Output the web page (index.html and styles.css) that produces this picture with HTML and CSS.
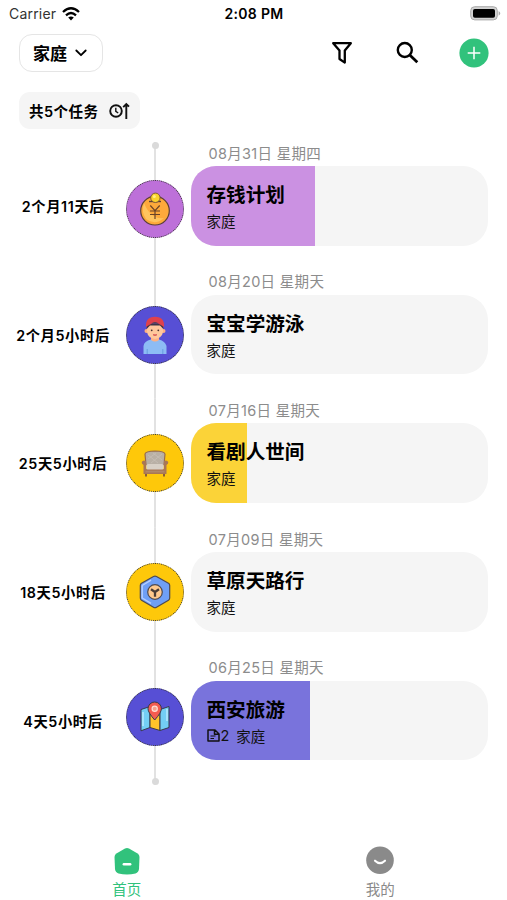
FILE: index.html
```
<!DOCTYPE html>
<html lang="zh-CN">
<head>
<meta charset="UTF-8">
<meta name="viewport" content="width=device-width, initial-scale=1.0">
<title>首页</title>
<link rel="stylesheet" href="styles.css">
</head>
<body>
    <div class="status-bar">
        <div class="carrier">
            <span>Carrier</span>
            <svg width="18" height="14" viewBox="0 0 18 14" fill="none" stroke="#000" stroke-width="2.3">
                <path d="M1 5 Q9 -2.4 17 5"/>
                <path d="M4 8.3 Q9 3.8 14 8.3"/>
                <path d="M6.2 10.6 Q9 8.2 11.8 10.6 L9 13.5 Z" fill="#000" stroke="none"/>
            </svg>
        </div>
        <div class="clock">2:08 PM</div>
        <svg class="battery" width="31" height="15" viewBox="0 0 31 15">
            <rect x="0.7" y="0.7" width="26.6" height="13.2" rx="4" fill="#d2d2d2" stroke="#aaa"/>
            <rect x="3" y="3" width="22" height="8.8" rx="1.8" fill="#000"/>
            <path d="M28.6 5 Q32 7.3 28.6 9.7 Z" fill="#aaa"/>
        </svg>
    </div>

    <div class="toolbar">
        <button class="group-button">
            <span>家庭</span>
            <svg width="12" height="8" viewBox="0 0 12 8" fill="none" stroke="#000" stroke-width="1.8" stroke-linecap="round" stroke-linejoin="round">
                <path d="M1.3 1.5 L6 6.2 L10.7 1.5"/>
            </svg>
        </button>
        <div class="actions">
            <svg width="22" height="24" viewBox="0 0 22 24" fill="none" stroke="#000" stroke-width="2.3" stroke-linejoin="round">
                <path d="M2.2 2.2 H19.8 L13.8 9.5 V21.6 L8.5 18 V9.5 Z"/>
            </svg>
            <svg width="24" height="24" viewBox="0 0 24 24" fill="none" stroke="#000" stroke-width="2.4">
                <circle cx="9.8" cy="9" r="7"/>
                <path d="M15 14.2 L22.3 21.3" stroke-width="2.8"/>
            </svg>
            <svg width="30" height="30" viewBox="0 0 30 30">
                <circle cx="15" cy="15" r="14.6" fill="#31c27c"/>
                <path d="M8.7 15 H21.3 M15 8.7 V21.3" stroke="#fff" stroke-width="1.5"/>
            </svg>
        </div>
    </div>

    <div class="summary">
        <span>共5个任务</span>
        <svg width="21" height="18" viewBox="0 0 21 18" fill="none" stroke="#111" stroke-width="1.9">
            <circle cx="7" cy="9" r="5.8"/>
            <path d="M6.8 5.8 V9.3 L9.2 11" stroke-width="1.4"/>
            <path d="M17.3 17 V2.5 M14.2 5.2 L17.3 2 L20 4.7"/>
        </svg>
    </div>

    <div class="timeline">
        <div class="row first">
            <div class="remain">2个月11天后</div>
            <div class="track">
                <div class="node purple">
                    <svg width="32" height="34" viewBox="0 0 32 34">
                        <circle cx="16" cy="18.7" r="14.3" fill="#fda93b" stroke="#5b4038" stroke-width="1.2"/>
                        <path d="M5 11 Q2 20 7 27 Q16 34 25 26 Q12 28 5 11Z" fill="#ffc45e"/>
                        <path d="M10 9.5 H22" stroke="#5b4038" stroke-width="1.4"/>
                        <circle cx="16.4" cy="5.8" r="4.7" fill="#fad32d" stroke="#705036" stroke-width=".9"/>
                        <circle cx="15.3" cy="4.4" r="1.5" fill="#fff083"/>
                        <path d="M11.3 13.5 L16 18.7 L20.7 13.5 M11 19 H21 M11 22.5 H21 M16 18.7 V27" fill="none" stroke="#694328" stroke-width="1.2"/>
                    </svg>
                </div>
            </div>
            <div class="entry">
                <div class="date">08月31日 星期四</div>
                <div class="card">
                    <div class="progress purple-light" style="width: 41.9%"></div>
                    <div class="title">存钱计划</div>
                    <div class="meta">家庭</div>
                </div>
            </div>
        </div>

        <div class="row">
            <div class="remain">2个月5小时后</div>
            <div class="track">
                <div class="node indigo">
                    <svg width="26" height="38" viewBox="0 0 26 38">
                        <path d="M1.5 38 V30 Q2 25 9 23.5 H17 Q23 25 24.5 30 V38 Z" fill="#8dbcf5"/>
                        <path d="M5.2 33 V38 M20.8 33 V38" stroke="#6095db" stroke-width=".8"/>
                        <path d="M9 20 H17 V24 Q13 27 9 24Z" fill="#ffb083"/>
                        <circle cx="4.5" cy="15" r="2" fill="#ffb083"/>
                        <circle cx="21.5" cy="15" r="2" fill="#ffb083"/>
                        <path d="M5 8 H21 V16 Q20 22 13 23 Q6 22 5 16Z" fill="#ffc79c"/>
                        <path d="M4.7 13 V8 H21.3 V13 L18 9.5 H8Z" fill="#3f3446"/>
                        <path d="M4 11 Q3 1 13 .7 Q23 1 22 11 L18.5 8.8 Q13 5 7.5 8.8Z" fill="#df414c"/>
                        <path d="M9 7.8 Q13 4 17 7.8Z" fill="#514154"/>
                        <circle cx="9.7" cy="14.3" r=".9" fill="#4b3030"/>
                        <circle cx="16.3" cy="14.3" r=".9" fill="#4b3030"/>
                        <path d="M11 18.7 Q13 20.5 15 18.7Z" fill="#d95555" stroke="#d95555" stroke-width=".7"/>
                    </svg>
                </div>
            </div>
            <div class="entry">
                <div class="date">08月20日 星期天</div>
                <div class="card">
                    <div class="title">宝宝学游泳</div>
                    <div class="meta">家庭</div>
                </div>
            </div>
        </div>

        <div class="row">
            <div class="remain">25天5小时后</div>
            <div class="track">
                <div class="node yellow">
                    <svg width="28" height="27" viewBox="0 0 28 27">
                        <path d="M5 22 V26.5 M23 22 V26.5" stroke="#805538" stroke-width="1.8"/>
                        <path d="M5 15 L4 4 Q4.5 1.2 14 1 Q23.5 1.2 24 4 L23 15Z" fill="#b9b0a5" stroke="#976b4e" stroke-width="1.2"/>
                        <path d="M7 5 L17 13 M12 3 L21 10 M21 4 L10 13 M15 3 L7 9" stroke="#cbc3ba" stroke-width=".6"/>
                        <path d="M.7 12 Q2 9.5 5 11 V19 H23 V11 Q26 9.5 27.3 12 Q27.5 14 25.5 15 V24 H2.5 V15 Q.5 14 .7 12Z" fill="#a97755"/>
                        <rect x="5.3" y="14" width="17.4" height="5.6" rx="1.5" fill="#d8d0c6"/>
                        <path d="M4.5 20.7 H23.5 V22.5 H4.5Z" fill="#b08869"/>
                    </svg>
                </div>
            </div>
            <div class="entry">
                <div class="date">07月16日 星期天</div>
                <div class="card">
                    <div class="progress yellow-light" style="width: 18.9%"></div>
                    <div class="title">看剧人世间</div>
                    <div class="meta">家庭</div>
                </div>
            </div>
        </div>

        <div class="row">
            <div class="remain">18天5小时后</div>
            <div class="track">
                <div class="node yellow">
                    <svg width="32" height="34" viewBox="0 0 32 34" stroke="#4e4a50" stroke-linejoin="round">
                        <path d="M14.5 1.5 Q16 .7 17.5 1.5 L29.5 8.3 Q30.7 9 30.7 10.5 V23 Q30.7 24.5 29.5 25.2 L17.5 32.3 Q16 33.2 14.5 32.3 L2.5 25.2 Q1.3 24.5 1.3 23 V10.5 Q1.3 9 2.5 8.3 Z" fill="#6f9ff5" stroke-width="1.2"/>
                        <path d="M3.2 10.5 L12 5.2 M3.2 10.5 V23 L12 28.3" fill="none" stroke="#b7d0ff" stroke-width="1.4"/>
                        <circle cx="16" cy="17" r="7.3" fill="#ffc98d" stroke-width="1.2"/>
                        <path d="M12 14.2 L16 17 L20 14.2 M16 17 V21.7" fill="none" stroke="#4b3d36" stroke-width="2.3"/>
                    </svg>
                </div>
            </div>
            <div class="entry">
                <div class="date">07月09日 星期天</div>
                <div class="card">
                    <div class="title">草原天路行</div>
                    <div class="meta">家庭</div>
                </div>
            </div>
        </div>

        <div class="row last">
            <div class="remain">4天5小时后</div>
            <div class="track">
                <div class="node indigo">
                    <svg width="30" height="32" viewBox="0 0 30 32" stroke="#393b4c" stroke-linejoin="round">
                        <path d="M1 8.5 L10 5.5 V26.5 L1 29.8Z" fill="#73cef4"/>
                        <path d="M10 5.5 L20 8.5 V29.5 L10 26.5Z" fill="#ffc32b"/>
                        <path d="M20 8.5 L29 5.5 V26.5 L20 29.5Z" fill="#73cef4"/>
                        <path d="M3 11 V25 M27 8 V20" stroke="#b9eaff" stroke-width="1.5"/>
                        <path d="M14.7 19 Q8 11.5 8 7.7 A6.7 6.7 0 0 1 21.4 7.7 Q21.4 11.5 14.7 19Z" fill="#f45c50"/>
                        <circle cx="14.7" cy="7.8" r="2.6" fill="#f6a08e" stroke="#ffe0d5" stroke-width="1.2"/>
                    </svg>
                </div>
            </div>
            <div class="entry">
                <div class="date">06月25日 星期天</div>
                <div class="card">
                    <div class="progress indigo-light" style="width: 40%"></div>
                    <div class="title">西安旅游</div>
                    <div class="meta">
                        <svg width="13" height="13" viewBox="0 0 13 13" fill="none" stroke="#111" stroke-width="1.5" stroke-linejoin="round">
                            <path d="M1 1 H8 L12 5 V12 H1 Z M7.5 1.3 V5.2 H12"/>
                            <path d="M3.5 7 H8.5 M3.5 9.5 H7" stroke-width="1.1"/>
                        </svg>
                        <span class="count">2</span>
                        <span>家庭</span>
                    </div>
                </div>
            </div>
        </div>
    </div>

    <div class="tab-bar">
        <div class="tab active">
            <svg width="28" height="28" viewBox="0 0 28 28">
                <path d="M12 1.5 Q14 .4 16 1.5 L24.6 6.6 Q26.5 8 26.5 10 L26 22 Q25.7 25.5 22.5 26.4 Q14 28.4 5.5 26.4 Q2.3 25.5 2 22 L1.5 10 Q1.5 8 3.4 6.6Z" fill="#31c27c"/>
                <path d="M10.8 17.2 H17.2" stroke="#fff" stroke-width="2.4" stroke-linecap="round"/>
            </svg>
            <span>首页</span>
        </div>
        <div class="tab">
            <svg width="28" height="28" viewBox="0 0 28 28">
                <circle cx="14" cy="13.3" r="13.8" fill="#8a8a8a"/>
                <path d="M9 13.7 Q14 18.5 19 13.7" fill="none" stroke="#fff" stroke-width="2.1" stroke-linecap="round"/>
            </svg>
            <span>我的</span>
        </div>
    </div>
</body>
</html>
```
FILE: styles.css
```
* {
    box-sizing: border-box;
}
body {
    margin: 0;
    height: 900px;
    display: flex;
    flex-direction: column;
    overflow: hidden;
    background: #fff;
    color: #000;
    font-family: Inter, "Noto Sans CJK SC", sans-serif;
}
svg {
    display: block;
    flex: none;
    overflow: visible;
}
.status-bar {
    display: grid;
    grid-template-columns: 1fr auto 1fr;
    align-items: center;
    height: 27px;
    padding: 0 6px 0 9px;
    font-size: 14px;
}
.carrier {
    display: flex;
    align-items: center;
    gap: 6px;
    color: #333;
    letter-spacing: 0.2px;
}
.clock {
    margin-right: 2px;
    font-weight: 600;
    letter-spacing: 0.3px;
}
.battery {
    justify-self: end;
}
.toolbar {
    display: flex;
    align-items: center;
    justify-content: space-between;
    height: 51px;
    padding: 0 18px 0 19px;
}
.group-button {
    display: flex;
    align-items: center;
    gap: 8px;
    width: 84px;
    height: 38px;
    padding: 0 0 0 13px;
    border: 1.5px solid #e5e5e5;
    border-radius: 13px;
    background: #fff;
    color: #000;
    font-family: inherit;
    font-size: 17px;
    font-weight: 600;
}
.actions {
    display: flex;
    align-items: center;
    gap: 42px;
}
.actions svg:nth-child(2) {
    margin-right: -2px;
}
.summary {
    display: flex;
    align-items: center;
    align-self: flex-start;
    gap: 10px;
    height: 37px;
    margin: 14px 0 0 19px;
    padding: 0 10px;
    border-radius: 11px;
    background: #f5f5f5;
    font-size: 14.5px;
    font-weight: 600;
    letter-spacing: 0.5px;
}
.timeline {
    margin-top: 12.5px;
}
.row {
    display: grid;
    grid-template-columns: 126px 58px 297.5px;
    height: 128.7px;
}
.remain {
    align-self: center;
    padding-bottom: 1px;
    text-align: center;
    font-size: 14.3px;
    font-weight: 600;
    letter-spacing: 0.6px;
    white-space: nowrap;
}
.track {
    position: relative;
    display: flex;
    align-items: center;
    background: linear-gradient(#e2e2e2, #e2e2e2) center / 2px 100% no-repeat;
}
.first .track {
    padding-top: 7px;
}
.last .track {
    padding-bottom: 8px;
}
.first .track::before,
.last .track::after {
    content: "";
    position: absolute;
    left: 25.5px;
    width: 7px;
    height: 7px;
    border-radius: 50%;
    background: #dadada;
}
.first .track::before {
    top: 0;
}
.last .track::after {
    bottom: 0;
}
.node {
    display: flex;
    align-items: center;
    justify-content: center;
    width: 58px;
    height: 58px;
    border: 1.5px dotted #333;
    border-radius: 50%;
}
.purple {
    background: #bd70d9;
}
.indigo {
    background: #574fd5;
}
.yellow {
    background: #fec80a;
}
.entry {
    margin-left: 6.5px;
    width: 297.5px;
}
.date {
    height: 24.5px;
    padding-left: 18px;
    line-height: 23px;
    font-size: 14.5px;
    letter-spacing: 0.3px;
    color: #8c8c8c;
}
.card {
    position: relative;
    height: 79.5px;
    padding: 14px 16px 0;
    overflow: hidden;
    border-radius: 25px;
    background: #f5f5f5;
}
.progress {
    position: absolute;
    top: 0;
    left: 0;
    height: 100%;
}
.purple-light {
    background: #cb91e2;
}
.yellow-light {
    background: #fbd338;
}
.indigo-light {
    background: #7973dc;
}
.title {
    position: relative;
    height: 29px;
    line-height: 30px;
    font-size: 19.6px;
    font-weight: 600;
}
.meta {
    position: relative;
    display: flex;
    align-items: center;
    height: 23px;
    font-size: 14.5px;
    color: #111;
}
.count {
    margin: 0 7px 0 1px;
}
.tab-bar {
    display: flex;
    margin-top: auto;
    height: 53px;
}
.tab {
    display: flex;
    flex: 1;
    flex-direction: column;
    align-items: center;
    font-size: 14.5px;
    line-height: 29px;
    color: #8a8a8a;
}
.active {
    color: #31c27c;
}
```
